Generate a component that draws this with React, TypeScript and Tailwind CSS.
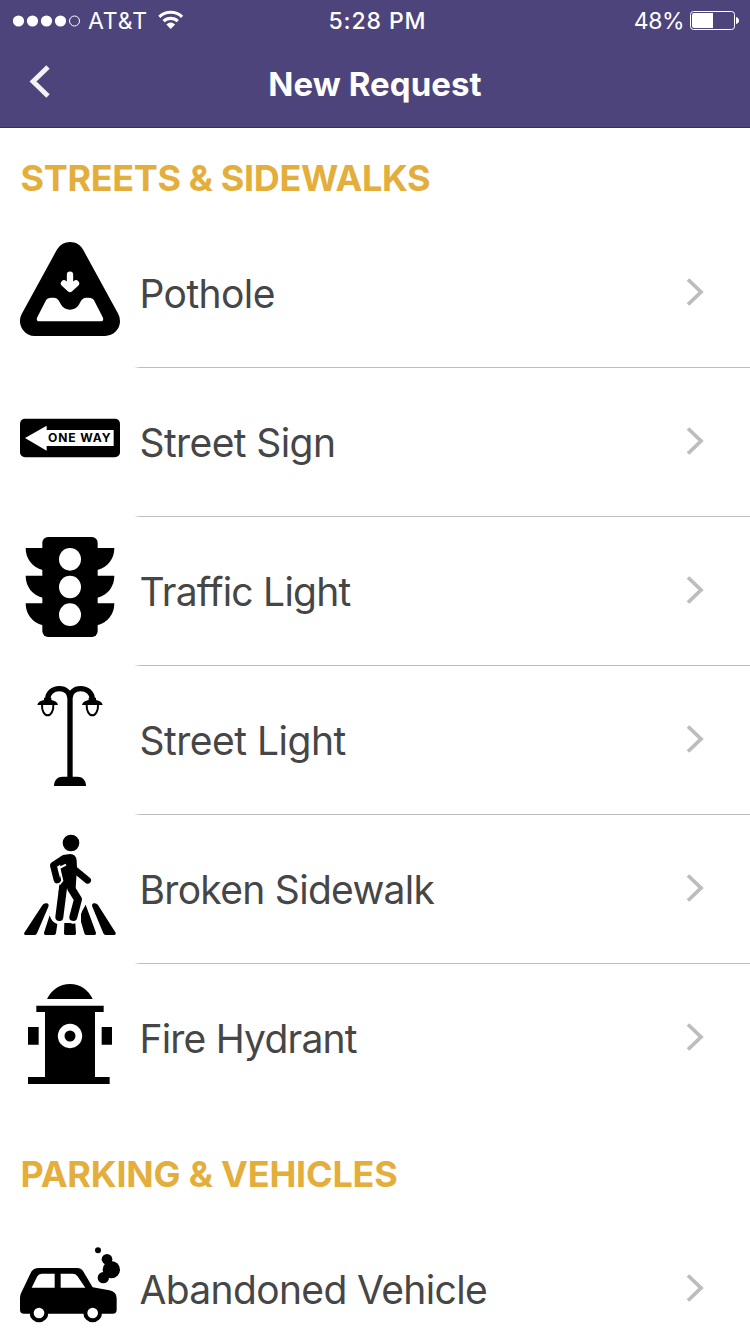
import type { ReactNode } from "react";

function PotholeIcon() {
  return (
    <svg viewBox="30 27 300 300" className="size-[100px]">
      <path d="M180 81 L75 273 H285 Z" fill="#000" stroke="#000" strokeWidth="90" strokeLinejoin="round" />
      <path
        d="M108 211 Q112 203 124 203 H131 C143 203 147 212 152 222 C158 233 168 239 180 239 C192 239 202 233 208 222 C213 212 217 203 229 203 H236 Q248 203 252 211 L279 263 Q282 274 272 274 H88 Q78 274 81 263 Z"
        fill="#fff"
      />
      <path d="M180 134 V172 M162 160 L180 177 L198 160" fill="none" stroke="#fff" strokeWidth="19" strokeLinecap="round" strokeLinejoin="round" />
    </svg>
  );
}

function StreetSignIcon() {
  return (
    <svg viewBox="30 -36 300 300" className="size-[100px]">
      <rect x="30" y="56" width="300" height="116" rx="15" />
      <path d="M45 114 L110 77 V90 H311 V138 H110 V152 Z" fill="#fff" />
      <text x="114" y="127" textLength="190" lengthAdjust="spacingAndGlyphs" fontSize="35" fontWeight="700" letterSpacing="2.5" fontFamily="Inter, sans-serif">
        ONE WAY
      </text>
    </svg>
  );
}

function TrafficLightIcon() {
  return (
    <svg viewBox="30 21 300 300" className="size-[100px]">
      <rect x="97" y="21" width="166" height="300" rx="17" />
      {[54, 137, 220].map((y) => (
        <g key={y} transform={`translate(0 ${y})`}>
          <path d="M47 0 H313 C313 33 293 58 262 66 H98 C67 58 47 33 47 0 Z" />
          <ellipse cx="180" cy="34" rx="33" ry="34" fill="#fff" />
        </g>
      ))}
    </svg>
  );
}

function StreetLightIcon() {
  return (
    <svg viewBox="30 18 300 300" className="size-[100px]">
      <path d="M180 295 V55 C180 38 167 26 148 26 C128 26 114 39 113 57 M180 55 C180 38 193 26 212 26 C232 26 246 39 247 57" fill="none" stroke="#000" strokeWidth="16" />
      <path d="M132 318 C132 300 143 290 158 290 H202 C217 290 228 300 228 318 Z" />
      {[113, 247].map((x) => (
        <g key={x} transform={`translate(${x} 0)`}>
          <path d="M-11 53 H11 V60 C22 62 30 67 31 75 H-31 C-30 67 -22 62 -11 60 Z" />
          <path d="M-17 74 C-18 92 -10 106 0 106 C10 106 18 92 17 74" fill="none" stroke="#000" strokeWidth="6" />
        </g>
      ))}
    </svg>
  );
}

function SidewalkIcon() {
  return (
    <svg viewBox="30 21 300 300" className="size-[100px] overflow-visible">
      <path d="M98 230 Q103 224 111 226 Q118 229 115 236 L81 316 Q79 321 74 321 H47 Q40 320 43 314 Z" />
      <path d="M119 262 Q124 283 142 288 L138 316 Q137 321 132 321 H106 Q101 320 102 314 Z" />
      <path d="M163 285 H196 L198 316 Q198 321 193 321 H167 Q162 321 162 316 Z" />
      <path d="M213 255 L227 230 L258 314 Q259 321 253 321 H229 Q224 321 223 316 L213 281 Z" />
      <path d="M247 236 Q244 229 251 226 Q259 224 264 231 L317 314 Q319 320 313 321 H287 Q282 321 280 316 Z" />
      <path d="M158 185 L148 267 M186 185 L205 214 L190 267" fill="none" stroke="#fff" strokeWidth="40" strokeLinecap="round" strokeLinejoin="round" />
      <circle cx="183" cy="45" r="25" />
      <path d="M150 88 Q164 78 180 78 Q199 79 200 98 L201 120 L197 180 L188 190 L172 180 L160 195 L146 195 L148 174 L151 120 Z" />
      <path d="M159 180 L148 267 M184 182 L204 214 L190 267" fill="none" stroke="#000" strokeWidth="24" strokeLinecap="round" strokeLinejoin="round" />
      <path d="M193 124 L233 157" stroke="#000" strokeWidth="20" strokeLinecap="round" />
      <path d="M168 110 L148 120 L157 158 L148 169" fill="none" stroke="#fff" strokeWidth="6" strokeLinejoin="round" />
      <path d="M162 91 L130 112 L141 156" fill="none" stroke="#000" strokeWidth="20" strokeLinecap="round" strokeLinejoin="round" />
    </svg>
  );
}

function HydrantIcon() {
  return (
    <svg viewBox="30 24 300 300" className="size-[100px]">
      <path d="M111 69 C124 41 150 24 180 24 C210 24 235 41 248 69 Z" />
      <path d="M79 89 H281 V108 H255 V303 H299 V324 H54 V303 H105 V108 H79 Z" />
      <path d="M54 153 H86 V206 H54 Z M275 153 H306 V206 H275 Z" />
      <circle cx="180" cy="180" r="26.5" stroke="#fff" strokeWidth="20" />
    </svg>
  );
}

function VehicleIcon() {
  return (
    <svg viewBox="30 0 300 300" className="size-[100px]">
      <path d="M30 188 Q30 181 33 175 L62 114 Q69 99 86 99 H202 Q213 99 219 108 L248 157 L298 166 Q320 170 320 190 V224 Q320 236 308 236 H42 Q30 236 30 224 Z" />
      <path d="M65 158 L82 124 Q86 116 95 116 H134 V158 Z M152 116 H188 Q197 116 202 123 L226 158 H152 Z" fill="#fff" />
      <circle cx="87" cy="234" r="22" fill="#fff" stroke="#000" strokeWidth="12" />
      <circle cx="248" cy="234" r="22" fill="#fff" stroke="#000" strokeWidth="12" />
      <circle cx="264" cy="46" r="9" />
      <circle cx="291" cy="73" r="16" />
      <circle cx="304" cy="104" r="26" />
      <circle cx="280" cy="128" r="17" />
    </svg>
  );
}

function Row({ icon, label, tracking, last }: { icon: ReactNode; label: string; tracking: string; last?: boolean }) {
  return (
    <div className="flex h-[149px] shrink-0">
      <div className="ml-5 w-[114px] shrink-0 pt-5">{icon}</div>
      <div className="flex flex-1 flex-col">
        <div className="flex h-[148px] justify-between pl-[5.5px]">
          <span className={`pt-[51px] text-[39px] leading-[48px] whitespace-nowrap text-[#464646] ${tracking}`}>{label}</span>
          <svg viewBox="0 0 20 30" className="mt-[58px] mr-[45px] h-[30px] w-5">
            <path d="M3 2.5 L16 15 L3 27.5" fill="none" stroke="#bdbdbd" strokeWidth="3.8" />
          </svg>
        </div>
        {!last && <div className="h-px bg-linear-to-r from-white to-[#bcbcbf] to-[6px]" />}
      </div>
    </div>
  );
}

function StatusBar() {
  return (
    <div className="grid h-10 grid-cols-3 text-[23px] leading-10">
      <div className="flex items-center pl-[13px]">
        <svg viewBox="0 0 68 12" className="mt-px h-3 w-[68px]">
          {[5.5, 19.5, 33.5, 47.5].map((x) => (
            <circle key={x} cx={x} cy="6" r="5.6" fill="#fff" />
          ))}
          <circle cx="61.5" cy="6" r="5" fill="none" stroke="#fff" />
        </svg>
        <span className="ml-[7px] w-[58px] pt-0.5 leading-[38px] tracking-[0.9px]">AT&amp;T</span>
        <svg viewBox="0 0 26 20" className="ml-[12px] h-5 w-[26px]">
          <g fill="none" stroke="#fff" strokeWidth="3.1">
            <path d="M1.3 6.8 A16.5 16.5 0 0 1 24.1 6.8" />
            <path d="M5.6 11.1 A10.5 10.5 0 0 1 19.8 11.1" />
          </g>
          <path d="M8.3 14.4 Q12.7 10.8 17.1 14.4 L12.7 19 Z" fill="#fff" />
        </svg>
      </div>
      <div className="pt-0.5 pl-[5px] text-center leading-[38px] font-medium tracking-[0.9px]">5:28 PM</div>
      <div className="flex items-center justify-end pr-[11px]">
        <span className="mr-[6px] pt-0.5 leading-[38px] tracking-[-0.5px]">48%</span>
        <svg viewBox="0 0 49 20" className="h-5 w-[49px]">
          <rect x="0.5" y="1.5" width="44" height="18" rx="3" fill="none" stroke="#fff" />
          <path d="M4 3 H23 V18 H4 Q2 18 2 16 V5 Q2 3 4 3 Z" fill="#fff" />
          <path d="M46 7 Q49 8 49 10.5 Q49 13 46 14 Z" fill="#fff" />
        </svg>
      </div>
    </div>
  );
}

export default function App() {
  return (
    <div className="flex h-[1334px] w-[750px] flex-col overflow-hidden bg-white font-['Inter',sans-serif]">
      <header className="h-32 shrink-0 border-b border-[#382d60] bg-[#4d447b] text-white">
        <StatusBar />
        <div className="grid grid-cols-[100px_1fr_100px]">
          <svg viewBox="0 0 24 36" className="mt-[23px] ml-[28px] h-9 w-6">
            <path d="M20 4 L5 18.5 L20 33" fill="none" stroke="#f3f3f3" strokeWidth="4.8" />
          </svg>
          <h1 className="pt-[20px] text-center text-[33px] leading-[48px] font-bold tracking-[0.05px]">New Request</h1>
        </div>
      </header>
      <h2 className="h-[91px] shrink-0 pt-[28px] pl-[20.5px] text-[36px] leading-[44px] font-bold tracking-[-0.35px] whitespace-nowrap text-[#e4ae3c]">
        STREETS &amp; SIDEWALKS
      </h2>
      <Row icon={<PotholeIcon />} label="Pothole" tracking="tracking-[-0.6px]" />
      <Row icon={<StreetSignIcon />} label="Street Sign" tracking="tracking-[-0.6px]" />
      <Row icon={<TrafficLightIcon />} label="Traffic Light" tracking="tracking-[-0.75px]" />
      <Row icon={<StreetLightIcon />} label="Street Light" tracking="tracking-[-0.5px]" />
      <Row icon={<SidewalkIcon />} label="Broken Sidewalk" tracking="tracking-[-0.7px]" />
      <Row icon={<HydrantIcon />} label="Fire Hydrant" tracking="tracking-[-0.8px]" last />
      <h2 className="h-[102px] shrink-0 pt-[39px] pl-[20.5px] text-[36px] leading-[44px] font-bold tracking-[-0.2px] whitespace-nowrap text-[#e4ae3c]">
        PARKING &amp; VEHICLES
      </h2>
      <Row icon={<VehicleIcon />} label="Abandoned Vehicle" tracking="tracking-[-0.65px]" last />
    </div>
  );
}
